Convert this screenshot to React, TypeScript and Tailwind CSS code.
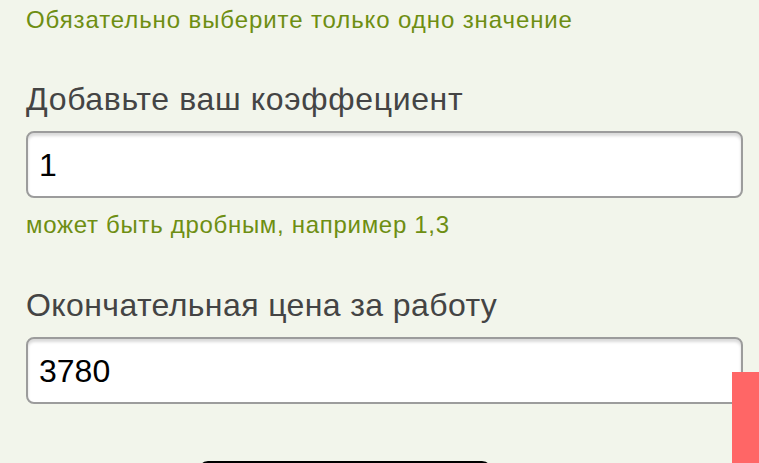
export default function App() {
  return (
    <div className="relative min-h-[463px] overflow-hidden bg-[#f2f5eb] pl-[26px] pr-[16px] pt-[6px] font-['Liberation_Sans',Arial,sans-serif]">
      <p className="text-[24px] leading-[28px] tracking-[0.9px] text-[#6e8e12]">Обязательно выберите только одно значение</p>

      <label className="mt-[47px] block text-[32px] leading-[36px] tracking-[0.65px] text-[#444444]">Добавьте ваш коэффециент</label>
      <div className="mt-[14px] flex h-[67px] items-center rounded-[8px] border-2 border-[#9c9c9c] bg-white pl-[11px] text-[32px] text-black shadow-[inset_0_3px_3px_rgba(0,0,0,0.15)]">
        1
      </div>
      <p className="mt-[13px] text-[24px] leading-[28px] tracking-[0.7px] text-[#6e8e12]">может быть дробным, например 1,3</p>

      <label className="mt-[48px] block text-[32px] leading-[36px] tracking-[0.4px] text-[#444444]">Окончательная цена за работу</label>
      <div className="mt-[14px] flex h-[67px] items-center rounded-[8px] border-2 border-[#9c9c9c] bg-white pl-[11px] text-[32px] text-black shadow-[inset_0_3px_3px_rgba(0,0,0,0.15)]">
        3780
      </div>

      <div className="ml-[172px] mt-[57px] h-[40px] w-[294px] rounded-t-[10px] bg-black" />

      <div className="absolute right-0 top-[372px] h-[91px] w-[27px] bg-[#ff6666]" />
    </div>
  );
}
